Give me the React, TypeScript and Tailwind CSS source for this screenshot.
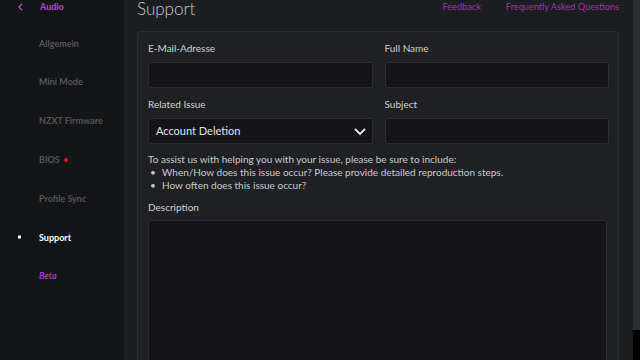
const NAV = ["Allgemein", "Mini Mode", "NZXT Firmware", "BIOS", "Profile Sync", "Support", "Beta"];

const Field = ({ label, children }: { label: string; children: React.ReactNode }) => (
  <div className="flex flex-col">
    <div className="h-[12px] text-[10px] leading-[12px] text-[#d2d2d4]">{label}</div>
    <div className="mt-[8px]">{children}</div>
  </div>
);

const Input = () => (
  <div className="h-[26px] w-full rounded-[2px] border border-[#2c2d31] bg-[#141417]" />
);

export default function App() {
  return (
    <div
      className="flex h-[360px] w-[640px] overflow-hidden bg-[#1c1d20]"
      style={{ fontFamily: 'Lato, "Open Sans", sans-serif' }}
    >
      {/* sidebar */}
      <aside className="flex w-[124px] shrink-0 flex-col bg-[#131416]">
        <div className="flex h-[14px] items-center">
          <svg viewBox="0 0 6 10" className="ml-[18px] h-[8px] w-[5px] text-[#b24ccb]">
            <path d="M5 1 1 5l4 4" fill="none" stroke="currentColor" strokeWidth="1.6" />
          </svg>
          <span className="ml-[17px] text-[9px] font-bold text-[#b24ccb]">Audio</span>
        </div>
        <nav className="mt-[10px] flex flex-col">
          {NAV.map((item) => {
            const active = item === "Support";
            const beta = item === "Beta";
            return (
              <div key={item} className="relative flex h-[38.8px] items-center pl-[39px]">
                {active && (
                  <span className="absolute left-[18px] top-1/2 size-[3px] -translate-y-1/2 bg-white" />
                )}
                <span
                  className={
                    active
                      ? "text-[9px] font-bold text-white"
                      : beta
                        ? "text-[9px] font-bold italic text-[#a53ec4]"
                        : "text-[9px] font-bold text-[#56565b]"
                  }
                >
                  {item}
                </span>
                {item === "BIOS" && (
                  <span className="ml-[4px] size-[4px] rounded-full bg-[#e3122d]" />
                )}
              </div>
            );
          })}
        </nav>
      </aside>

      {/* main */}
      <main className="flex min-w-0 flex-1 flex-col pl-[13px] pr-[14px]">
        <div className="flex h-[18px] items-start justify-between">
          <h1 className="text-[17px] font-light leading-[18px] text-[#c9c9cc]">Support</h1>
          <div className="flex gap-[25px] pt-[1px] text-[9.2px] leading-[12px] text-[#9d3aa3]">
            <span>Feedback</span>
            <span>Frequently Asked Questions</span>
          </div>
        </div>

        <section className="mt-[13px] flex-1 rounded-[3px] border border-[#2b2c30] bg-[#1f2023] pl-[10px] pr-[9px] pt-[10px]">
          <div className="grid grid-cols-2 gap-x-[12px] gap-y-[10px]">
            <Field label="E-Mail-Adresse">
              <Input />
            </Field>
            <Field label="Full Name">
              <Input />
            </Field>
            <Field label="Related Issue">
              <div className="flex h-[26px] items-center justify-between rounded-[2px] border border-[#2c2d31] bg-[#141417] pl-[7px] pr-[6px]">
                <span className="text-[11px] text-[#e2e2e4]">Account Deletion</span>
                <svg viewBox="0 0 12 7" className="h-[7px] w-[12px] text-[#e8e8ea]">
                  <path d="M1 1l5 5 5-5" fill="none" stroke="currentColor" strokeWidth="1.8" />
                </svg>
              </div>
            </Field>
            <Field label="Subject">
              <Input />
            </Field>
          </div>

          <div className="mt-[9px] text-[10px] leading-[13px] text-[#cbcbce]">
            <p>To assist us with helping you with your issue, please be sure to include:</p>
            <ul>
              <li className="flex">
                <span className="w-[14px] pl-[2px]">•</span>
                When/How does this issue occur? Please provide detailed reproduction steps.
              </li>
              <li className="flex">
                <span className="w-[14px] pl-[2px]">•</span>
                How often does this issue occur?
              </li>
            </ul>
          </div>

          <div className="mt-[9px] h-[12px] text-[10px] leading-[12px] text-[#d2d2d4]">Description</div>
          <div className="mr-[2px] mt-[7px] h-[200px] rounded-[2px] border border-[#2c2d31] bg-[#141417]" />
        </section>
      </main>

      {/* scrollbar */}
      <div className="flex w-[7px] shrink-0 flex-col bg-black">
        <div className="h-[330px] bg-[#2c2d31]" />
      </div>
    </div>
  );
}
